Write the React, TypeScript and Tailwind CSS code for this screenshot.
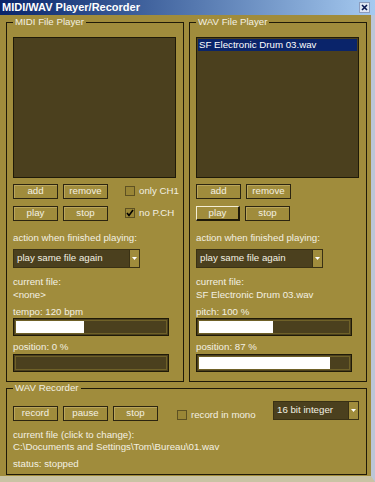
import React from "react";

const OLIVE = "bg-[#a08c3c]";

function Btn({ label, pressed }: { label: string; pressed?: boolean }) {
  return (
    <div
      className={
        pressed
          ? "flex h-[15px] w-[44px] items-center justify-center border-t border-l border-t-[#f4eed4] border-l-[#f4eed4] border-r-2 border-b-2 border-r-[#1f1a08] border-b-[#1f1a08] text-[#f3f0e2]"
          : "flex h-[15px] w-[45px] items-center justify-center border border-[#2c2510] shadow-[inset_1px_1px_0_#b9a55c] text-[#f3f0e2]"
      }
    >
      {label}
    </div>
  );
}

function Check({ label, checked }: { label: string; checked?: boolean }) {
  return (
    <div className="flex items-center gap-[4px] whitespace-nowrap text-[#f3f0e2]">
      <div className="flex h-[10px] w-[10px] shrink-0 items-center justify-center border border-[#5e5122] bg-[#9a8636]">
        {checked && (
          <svg width="8" height="8" viewBox="0 0 8 8">
            <path d="M1 4 L3 6.5 L7 1" stroke="#000" strokeWidth="1.6" fill="none" />
          </svg>
        )}
      </div>
      <span>{label}</span>
    </div>
  );
}

function Dropdown({ text, w }: { text: string; w: string }) {
  return (
    <div className={`flex h-[19px] shrink-0 ${w} border border-[#3a3114] bg-[#4b401e]`}>
      <div className="flex flex-1 items-center whitespace-nowrap pl-[3px] text-[#f3f0e2]">{text}</div>
      <div className="flex w-[10px] items-center justify-center border-l border-[#3a3114] bg-[#a08c3c]">
        <svg width="5" height="3" viewBox="0 0 5 3">
          <path d="M0 0 H5 L2.5 3 Z" fill="#fff" />
        </svg>
      </div>
    </div>
  );
}

function Bar({ pct }: { pct: number }) {
  return (
    <div className="h-[18px] w-[156px] border border-[#1f1a08] bg-[#4b401e] p-[1px]">
      <div className="h-full border border-[#6f6128] bg-[#4b401e]">
        <div className="h-full bg-white" style={{ width: `${pct}%` }} />
      </div>
    </div>
  );
}

function Group({
  title,
  className,
  children,
}: {
  title: string;
  className: string;
  children: React.ReactNode;
}) {
  return (
    <div className={`relative shrink-0 border border-[#1f1a08] ${className}`}>
      <span className={`absolute -top-[7px] left-[6px] px-[2px] leading-[12px] text-[#f3f0e2] ${OLIVE}`}>
        {title}
      </span>
      {children}
    </div>
  );
}

function PlayerCol({
  title,
  selected,
  pressed,
  checks,
  file,
  sliderLabel,
  sliderPct,
  posLabel,
  posPct,
}: {
  title: string;
  selected?: string;
  pressed?: boolean;
  checks?: boolean;
  file: string;
  sliderLabel: string;
  sliderPct: number;
  posLabel: string;
  posPct: number;
}) {
  return (
    <Group title={title} className="h-[360px] w-[178px] pl-[6px] pt-[14px]">
      <div className="h-[141px] w-[163px] border border-[#1f1a08] bg-[#4b401e] p-[1px]">
        {selected && (
          <div className="flex h-[12px] items-center bg-[#0a246a] pl-[1px] text-white">{selected}</div>
        )}
      </div>
      <div className="mt-[6px] flex flex-col gap-[7px]">
        <div className="flex items-center">
          <Btn label="add" />
          <div className="ml-[5px]">
            <Btn label="remove" />
          </div>
          {checks && (
            <div className="ml-[17px]">
              <Check label="only CH1" />
            </div>
          )}
        </div>
        <div className="flex items-center">
          <Btn label="play" pressed={pressed} />
          <div className="ml-[5px]">
            <Btn label="stop" />
          </div>
          {checks && (
            <div className="ml-[17px]">
              <Check label="no P.CH" checked />
            </div>
          )}
        </div>
      </div>
      <div className="mt-[11px] leading-[12px]">action when finished playing:</div>
      <div className="mt-[5px]">
        <Dropdown text="play same file again" w="w-[127px]" />
      </div>
      <div className="mt-[7px] leading-[13px]">current file:</div>
      <div className="leading-[13px]">{file}</div>
      <div className="mt-[5px] leading-[12px]">{sliderLabel}</div>
      <Bar pct={sliderPct} />
      <div className="mt-[5px] leading-[12px]">{posLabel}</div>
      <div className="mt-[1px]">
        <Bar pct={posPct} />
      </div>
    </Group>
  );
}

export default function App() {
  return (
    <div
      className={`flex h-[482px] w-[375px] flex-col overflow-hidden text-[9.7px] text-[#f3f0e2] ${OLIVE}`}
      style={{ fontFamily: '"Liberation Sans", Arial, sans-serif' }}
    >
      {/* title bar */}
      <div className="flex h-[15px] shrink-0 items-center justify-between bg-gradient-to-r from-[#0a246a] to-[#a6caf0] pl-[2px] pr-[5px]">
        <span className="text-[11px] font-bold leading-none text-white">MIDI/WAV Player/Recorder</span>
        <div className="flex h-[11px] w-[11px] items-center justify-center border border-[#8c9cbc] bg-[#dfe6f2]">
          <svg width="7" height="7" viewBox="0 0 7 7">
            <path d="M1 1 L6 6 M6 1 L1 6" stroke="#0a1850" strokeWidth="1.6" />
          </svg>
        </div>
      </div>

      <div className="flex flex-1 flex-col border-r-[4px] border-b-[6px] border-r-[#bcc6d8] border-b-[#c9c3a4] pl-[6px]">
        <div className="mt-[7px] flex gap-[5px]">
          <PlayerCol
            title="MIDI File Player"
            checks
            file="<none>"
            sliderLabel="tempo: 120 bpm"
            sliderPct={45}
            posLabel="position: 0 %"
            posPct={0}
          />
          <PlayerCol
            title="WAV File Player"
            selected="SF Electronic Drum 03.wav"
            pressed
            file="SF Electronic Drum 03.wav"
            sliderLabel="pitch: 100 %"
            sliderPct={49}
            posLabel="position: 87 %"
            posPct={87}
          />
        </div>

        <Group title="WAV Recorder" className="mt-[6px] h-[87px] w-[361px] pl-[6px] pt-[12px]">
          <div className="flex items-start">
            <div className="mt-[5px] flex shrink-0 items-center gap-[5px]">
              <Btn label="record" />
              <Btn label="pause" />
              <Btn label="stop" />
            </div>
            <div className="ml-[19px] mt-[7px] w-[96px] shrink-0">
              <Check label="record in mono" />
            </div>
            <Dropdown text="16 bit integer" w="w-[86px]" />
          </div>
          <div className="mt-[6px] leading-[12px]">current file (click to change):</div>
          <div className="leading-[12px]">C:\Documents and Settings\Tom\Bureau\01.wav</div>
          <div className="mt-[5px] leading-[12px]">status: stopped</div>
        </Group>
      </div>
    </div>
  );
}
